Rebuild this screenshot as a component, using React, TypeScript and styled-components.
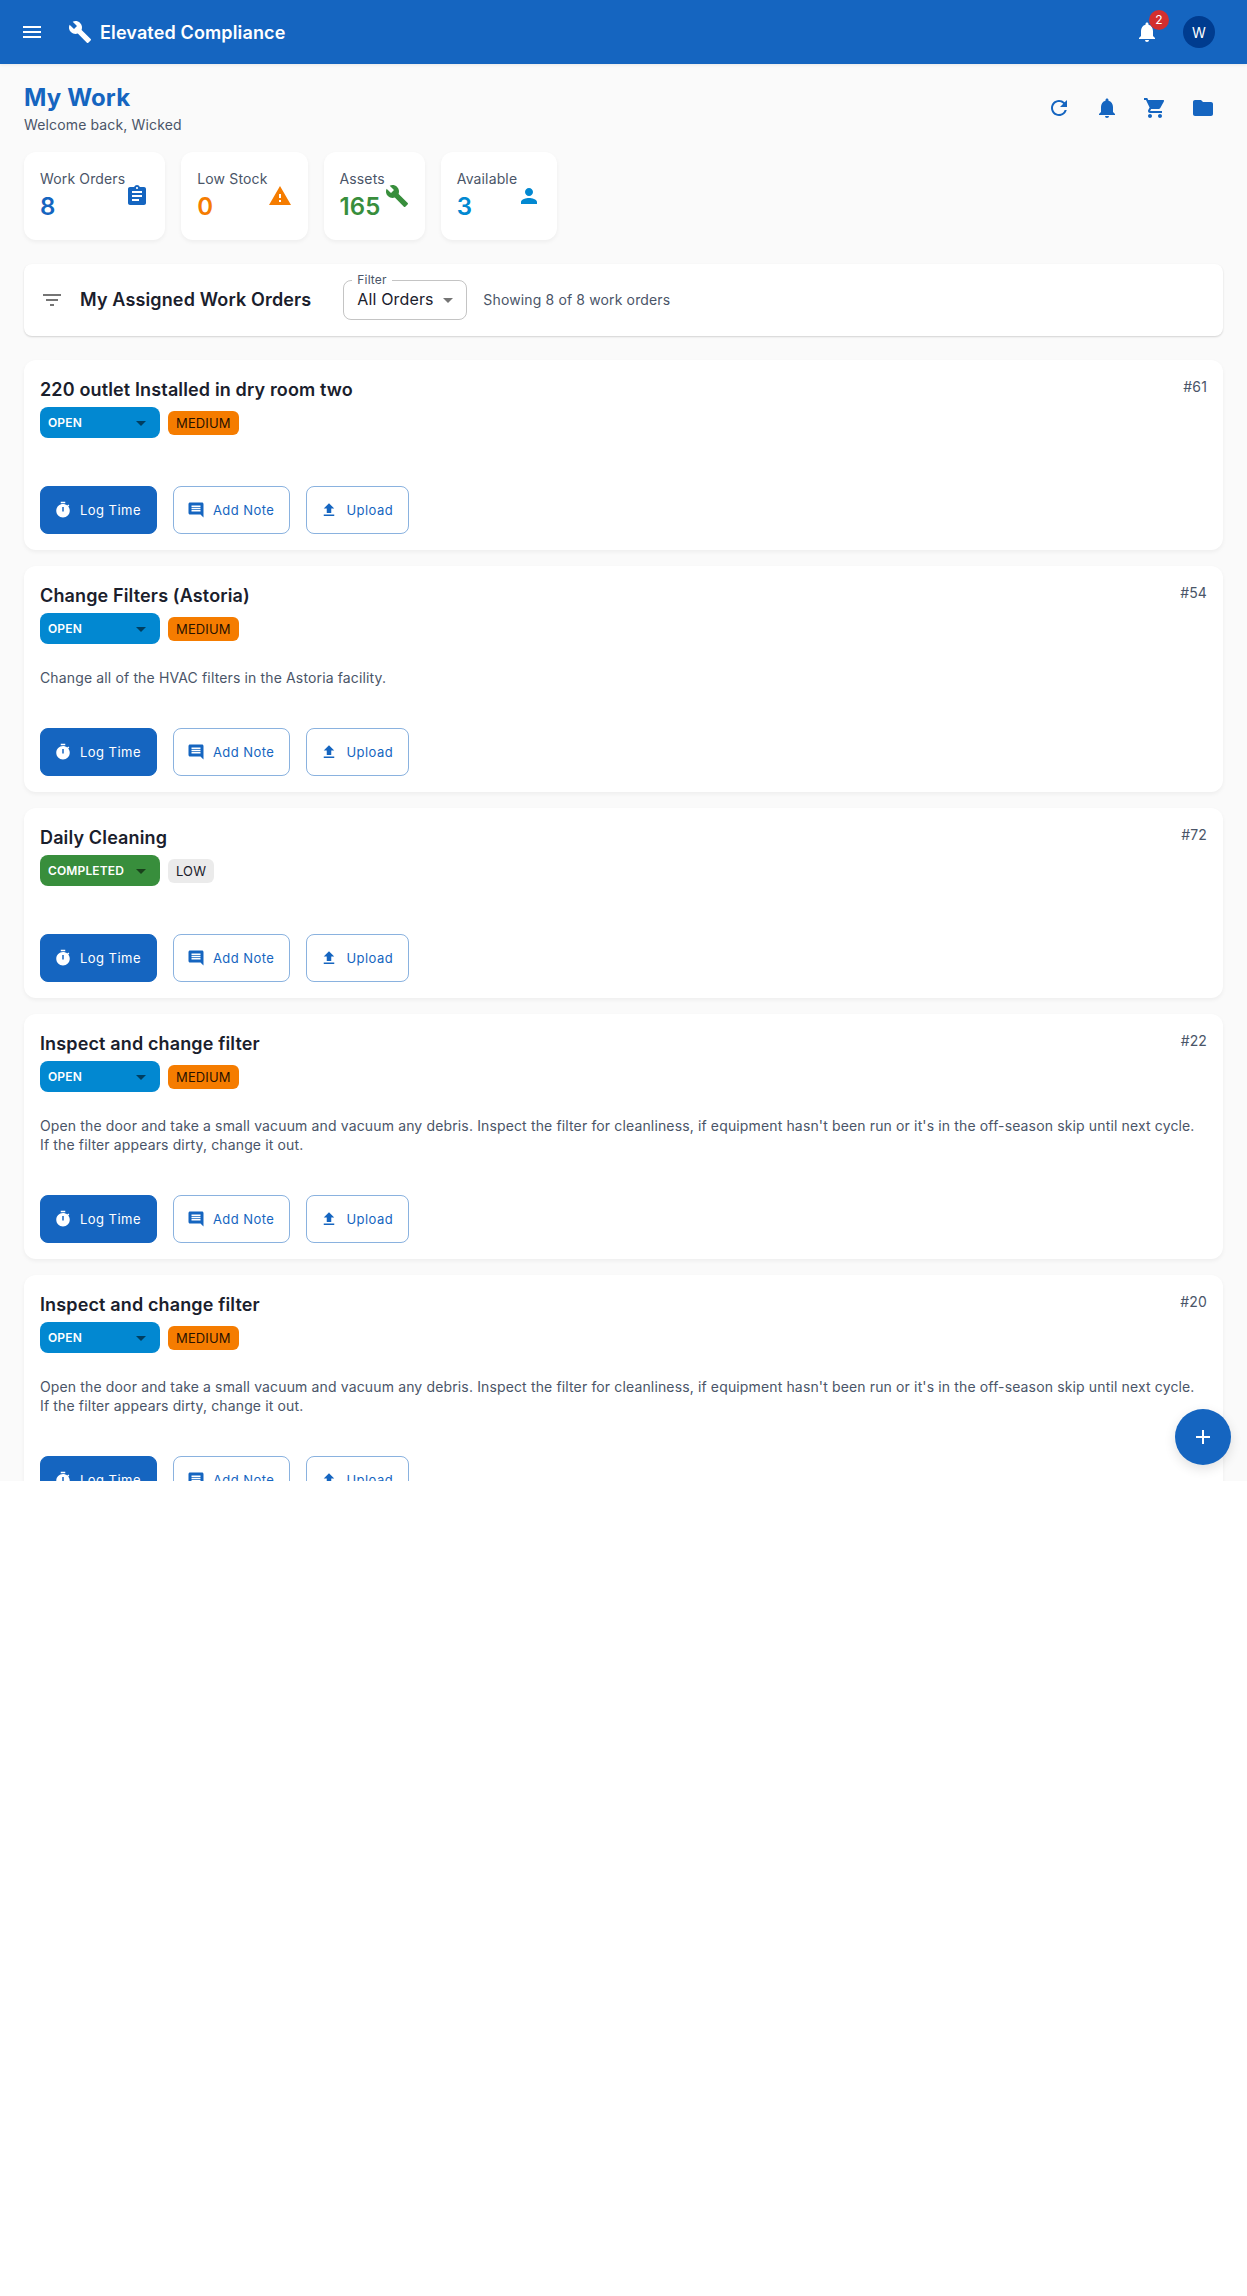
import React from 'react';
import styled, { createGlobalStyle } from 'styled-components';
import {
  MdAdd,
  MdArrowDropDown,
  MdAssignment,
  MdBuild,
  MdComment,
  MdFilterList,
  MdFolder,
  MdMenu,
  MdNotifications,
  MdPerson,
  MdRefresh,
  MdShoppingCart,
  MdUpload,
  MdWarning,
} from 'react-icons/md';

const color = {
  primary: '#1565c0',
  primaryDark: '#003c8f',
  info: '#0288d1',
  warning: '#f57c00',
  success: '#388e3c',
  error: '#d32f2f',
  text: '#1a202c',
  muted: '#4a5568',
  page: '#fafafa',
};

const GlobalStyle = createGlobalStyle`
  *, *::before, *::after { box-sizing: border-box; }
  body {
    margin: 0;
    background: #fff;
    color: ${color.text};
    font-family: Inter, Roboto, sans-serif;
    font-size: 14px;
    letter-spacing: 0.01em;
    line-height: 21px;
  }
  h1, h2, h3, p { margin: 0; }
  button, select { font-family: inherit; letter-spacing: inherit; }
  svg { display: block; flex-shrink: 0; }
`;

const Shell = styled.div`
  position: relative;
  height: 64.5vh;
  overflow: hidden;
  background: ${color.page};
`;

const AppBar = styled.header`
  position: relative;
  display: flex;
  align-items: center;
  height: 64px;
  padding: 0 24px 0 12px;
  background: ${color.primary};
  color: #fff;
  box-shadow: 0 1px 3px rgba(0, 0, 0, 0.08);
`;

const IconButton = styled.button`
  display: flex;
  align-items: center;
  justify-content: center;
  width: 40px;
  height: 40px;
  padding: 0;
  border: 0;
  border-radius: 50%;
  background: transparent;
  color: inherit;
  font-size: 24px;
  cursor: pointer;
`;

const Brand = styled.div`
  display: flex;
  flex: 1;
  align-items: center;
  gap: 8px;
  margin-left: 16px;
  font-size: 18px;
  font-weight: 600;
  line-height: 27px;
`;

const BarActions = styled.div`
  display: flex;
  align-items: center;
  gap: 8px;
`;

const BadgeAnchor = styled.span`
  position: relative;
`;

const Badge = styled.span`
  position: absolute;
  top: -10px;
  right: -10px;
  min-width: 20px;
  height: 20px;
  border-radius: 10px;
  background: ${color.error};
  color: #fff;
  font-size: 12px;
  line-height: 20px;
  text-align: center;
`;

const Avatar = styled.span`
  display: flex;
  align-items: center;
  justify-content: center;
  width: 32px;
  height: 32px;
  border-radius: 50%;
  background: ${color.primaryDark};
  font-size: 14px;
`;

const AvatarButton = styled(IconButton)`
  width: 48px;
  height: 48px;
`;

const Main = styled.main`
  padding: 16px 24px;
`;

const PageHead = styled.div`
  display: flex;
  align-items: center;
  justify-content: space-between;
  min-height: 56px;
  margin-bottom: 16px;
`;

const PageTitle = styled.h1`
  color: ${color.primary};
  font-size: 24px;
  font-weight: 700;
  line-height: 33px;
`;

const Muted = styled.p`
  color: ${color.muted};
`;

const HeadActions = styled.div`
  display: flex;
  gap: 8px;
  color: ${color.primary};
`;

const Stats = styled.section`
  display: flex;
  flex-wrap: wrap;
  gap: 16px;
  margin-bottom: 24px;
`;

const Surface = styled.article`
  padding: 16px;
  border-radius: 12px;
  background: #fff;
  box-shadow: 0 2px 4px rgba(0, 0, 0, 0.05);
`;

const StatCard = styled(Surface)`
  display: flex;
  align-items: center;
`;

const StatIcon = styled.span<{ $tone: string }>`
  color: ${(p) => p.$tone};
  font-size: 24px;
`;

const StatValue = styled.p<{ $tone: string }>`
  color: ${(p) => p.$tone};
  font-size: 24px;
  font-weight: 600;
  line-height: 35px;
`;

const FilterBar = styled.section`
  display: flex;
  align-items: center;
  gap: 16px;
  margin-bottom: 24px;
  padding: 16px;
  border-radius: 8px;
  background: #fff;
  box-shadow: 0 1px 2px rgba(0, 0, 0, 0.16);

  > svg {
    color: rgba(0, 0, 0, 0.54);
    font-size: 24px;
  }

  > h2,
  > p {
    line-height: 20px;
  }
`;

const Heading = styled.h2`
  font-size: 18px;
  font-weight: 600;
  line-height: 27px;
`;

const FilterField = styled.div`
  position: relative;
  margin-left: 16px;
`;

const FilterLabel = styled.label`
  position: absolute;
  top: -8px;
  left: 9px;
  padding: 0 5px;
  background: #fff;
  color: ${color.muted};
  font-size: 12px;
  line-height: 16px;
`;

const FilterSelect = styled.select`
  display: block;
  height: 40px;
  padding: 0 32px 2px 13px;
  border: 1px solid rgba(0, 0, 0, 0.23);
  border-radius: 8px;
  background: transparent;
  color: ${color.text};
  font-size: 16px;
  appearance: none;
`;

const SelectArrow = styled(MdArrowDropDown)`
  position: absolute;
  top: calc(50% - 12px);
  right: 7px;
  color: rgba(0, 0, 0, 0.54);
  font-size: 24px;
  pointer-events: none;
`;

const OrderList = styled.section`
  display: flex;
  flex-direction: column;
  gap: 16px;
`;

const OrderHead = styled.div`
  display: flex;
  align-items: flex-start;
  justify-content: space-between;
`;

const Tags = styled.div`
  display: flex;
  align-items: center;
  gap: 8px;
  margin-top: 4px;
`;

const StatusField = styled.div`
  position: relative;
`;

const StatusSelect = styled.select<{ $tone: string }>`
  display: block;
  width: 120px;
  height: 31px;
  padding: 0 32px 0 8px;
  border: 0;
  border-radius: 8px;
  background: ${(p) => p.$tone};
  color: #fff;
  font-size: 12px;
  font-weight: 600;
  appearance: none;
`;

const Chip = styled.span<{ $medium: boolean }>`
  padding: 0 8px;
  border-radius: 6px;
  background: ${(p) => (p.$medium ? color.warning : 'rgba(0, 0, 0, 0.08)')};
  color: ${(p) => (p.$medium ? 'rgba(0, 0, 0, 0.87)' : color.text)};
  font-size: 13px;
  line-height: 24px;
`;

const Description = styled.p`
  margin: 24px 0 -7px;
  color: ${color.muted};
  line-height: 19px;
`;

const Actions = styled.div`
  display: flex;
  flex-wrap: wrap;
  gap: 16px;
  margin-top: 48px;
`;

const ActionButton = styled.button<{ $filled?: boolean }>`
  display: flex;
  align-items: center;
  gap: 8px;
  height: 48px;
  padding: 0 15px 0 13px;
  border: 1px solid ${(p) => (p.$filled ? color.primary : 'rgba(21, 101, 192, 0.5)')};
  border-radius: 8px;
  background: ${(p) => (p.$filled ? color.primary : 'transparent')};
  color: ${(p) => (p.$filled ? '#fff' : color.primary)};
  font-size: 13px;
  letter-spacing: 0.035em;
  cursor: pointer;

  svg {
    width: 18px;
    height: 18px;
  }
`;

const Fab = styled(IconButton)`
  position: absolute;
  right: 16px;
  bottom: 16px;
  width: 56px;
  height: 56px;
  background: ${color.primary};
  color: #fff;
  box-shadow: 0 4px 12px rgba(0, 0, 0, 0.12);
`;

const TimerIcon = () => (
  <svg viewBox="0 0 24 24" fill="currentColor" aria-hidden="true">
    <path d="M9 1h6v2H9zm10.03 6.39 1.42-1.42c-.43-.51-.9-.99-1.41-1.41l-1.42 1.42C16.07 4.74 14.12 4 12 4c-4.97 0-9 4.03-9 9s4.02 9 9 9 9-4.03 9-9c0-2.12-.74-4.07-1.97-5.61M13 14h-2V8h2z" />
  </svg>
);

const stats = [
  { label: 'Work Orders', value: 8, tone: color.primary, icon: <MdAssignment /> },
  { label: 'Low Stock', value: 0, tone: color.warning, icon: <MdWarning /> },
  { label: 'Assets', value: 165, tone: color.success, icon: <MdBuild /> },
  { label: 'Available', value: 3, tone: color.info, icon: <MdPerson /> },
];

interface Order {
  id: number;
  title: string;
  status: 'OPEN' | 'COMPLETED';
  priority: 'MEDIUM' | 'LOW';
  description?: string;
}

const inspectText =
  "Open the door and take a small vacuum and vacuum any debris. Inspect the filter for cleanliness, if equipment hasn't been run or it's in the off-season skip until next cycle. If the filter appears dirty, change it out.";

const orders: Order[] = [
  { id: 61, title: '220 outlet Installed in dry room two', status: 'OPEN', priority: 'MEDIUM' },
  {
    id: 54,
    title: 'Change Filters (Astoria)',
    status: 'OPEN',
    priority: 'MEDIUM',
    description: 'Change all of the HVAC filters in the Astoria facility.',
  },
  { id: 72, title: 'Daily Cleaning', status: 'COMPLETED', priority: 'LOW' },
  { id: 22, title: 'Inspect and change filter', status: 'OPEN', priority: 'MEDIUM', description: inspectText },
  { id: 20, title: 'Inspect and change filter', status: 'OPEN', priority: 'MEDIUM', description: inspectText },
];

function OrderCard({ order }: { order: Order }) {
  return (
    <Surface>
      <OrderHead>
        <div>
          <Heading as="h3">{order.title}</Heading>
          <Tags>
            <StatusField>
              <StatusSelect
                aria-label={`Status of work order ${order.id}`}
                defaultValue={order.status}
                $tone={order.status === 'OPEN' ? color.info : color.success}
              >
                <option>OPEN</option>
                <option>COMPLETED</option>
              </StatusSelect>
              <SelectArrow />
            </StatusField>
            <Chip $medium={order.priority === 'MEDIUM'}>{order.priority}</Chip>
          </Tags>
        </div>
        <Muted>#{order.id}</Muted>
      </OrderHead>
      {order.description && <Description>{order.description}</Description>}
      <Actions>
        <ActionButton type="button" $filled>
          <TimerIcon />
          Log Time
        </ActionButton>
        <ActionButton type="button">
          <MdComment />
          Add Note
        </ActionButton>
        <ActionButton type="button">
          <MdUpload />
          Upload
        </ActionButton>
      </Actions>
    </Surface>
  );
}

export default function App() {
  return (
    <>
      <GlobalStyle />
      <Shell>
        <AppBar>
          <IconButton type="button" aria-label="Open menu">
            <MdMenu />
          </IconButton>
          <Brand>
            <MdBuild size={24} />
            Elevated Compliance
          </Brand>
          <BarActions>
            <IconButton type="button" aria-label="Notifications">
              <BadgeAnchor>
                <MdNotifications />
                <Badge>2</Badge>
              </BadgeAnchor>
            </IconButton>
            <AvatarButton type="button" aria-label="Account">
              <Avatar>W</Avatar>
            </AvatarButton>
          </BarActions>
        </AppBar>
        <Main>
          <PageHead>
            <div>
              <PageTitle>My Work</PageTitle>
              <Muted>Welcome back, Wicked</Muted>
            </div>
            <HeadActions>
              <IconButton type="button" aria-label="Refresh">
                <MdRefresh />
              </IconButton>
              <IconButton type="button" aria-label="Alerts">
                <MdNotifications />
              </IconButton>
              <IconButton type="button" aria-label="Cart">
                <MdShoppingCart />
              </IconButton>
              <IconButton type="button" aria-label="Documents">
                <MdFolder />
              </IconButton>
            </HeadActions>
          </PageHead>
          <Stats>
            {stats.map((s) => (
              <StatCard key={s.label}>
                <div>
                  <Muted>{s.label}</Muted>
                  <StatValue $tone={s.tone}>{s.value}</StatValue>
                </div>
                <StatIcon $tone={s.tone}>{s.icon}</StatIcon>
              </StatCard>
            ))}
          </Stats>
          <FilterBar>
            <MdFilterList />
            <Heading>My Assigned Work Orders</Heading>
            <FilterField>
              <FilterSelect id="order-filter" defaultValue="All Orders">
                <option>All Orders</option>
                <option>Open</option>
                <option>Closed</option>
              </FilterSelect>
              <FilterLabel htmlFor="order-filter">Filter</FilterLabel>
              <SelectArrow />
            </FilterField>
            <Muted>Showing 8 of 8 work orders</Muted>
          </FilterBar>
          <OrderList>
            {orders.map((o) => (
              <OrderCard key={o.id} order={o} />
            ))}
          </OrderList>
        </Main>
        <Fab type="button" aria-label="Add work order">
          <MdAdd />
        </Fab>
      </Shell>
    </>
  );
}
